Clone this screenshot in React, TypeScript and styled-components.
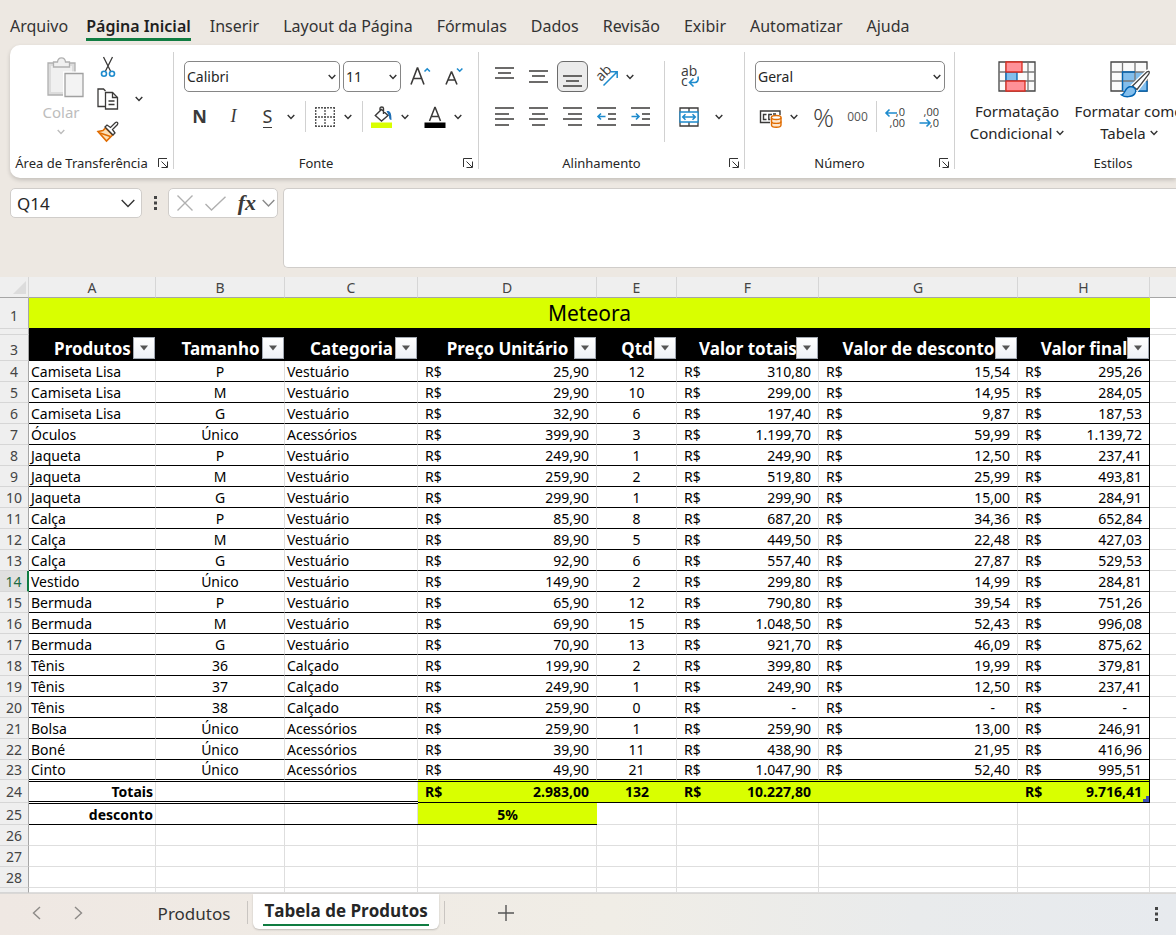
import React from "react";
import styled, { createGlobalStyle } from "styled-components";

const UI = '"Noto Sans", "Open Sans", sans-serif';
const CELL = '"Noto Sans", sans-serif';
const LIME = "#d9ff00";
const INK = "#3b3a39";
const BLUE = "#1e8bcd";
const GREEN = "#107c41";

const Global = createGlobalStyle`
  *, *::before, *::after { box-sizing: border-box; }
  body { margin: 0; background: #ede8e2; font-family: ${UI}; color: #262626; }
  button { font: inherit; color: inherit; background: none; border: 0; padding: 0; margin: 0; }
  svg { display: block; flex: none; overflow: visible; }
`;

const Page = styled.div`
  display: flex;
  flex-direction: column;
  min-height: 100vh;
  overflow: hidden;
`;

/* ---------- ribbon tabs ---------- */
const TabBar = styled.nav`
  display: flex;
  gap: 24px;
  height: 45px;
  padding: 14px 10px 0;
  white-space: nowrap;
  flex: none;
`;
const RibbonTab = styled.button<{ $active?: boolean }>`
  height: 27px;
  font-size: 16px;
  line-height: 24px;
  color: ${(p) => (p.$active ? "#1f1f1f" : "#333")};
  font-weight: ${(p) => (p.$active ? 600 : 400)};
  border-bottom: 3px solid ${(p) => (p.$active ? GREEN : "transparent")};
  margin: ${(p) => (p.$active ? "0 -5px 0 -6px" : "0")};
`;

/* ---------- ribbon ---------- */
const Ribbon = styled.section`
  display: flex;
  height: 133px;
  margin-left: 10px;
  background: #fff;
  border-radius: 10px 0 0 10px;
  box-shadow: 0 2px 4px rgba(0, 0, 0, 0.18);
  overflow: hidden;
  flex: none;
`;
const Group = styled.div<{ $width: number }>`
  display: flex;
  flex-direction: column;
  flex: none;
  width: ${(p) => p.$width}px;
  padding-top: 16px;
  position: relative;
  &:not(:last-child)::after {
    content: "";
    position: absolute;
    right: 0;
    top: 7px;
    bottom: 9px;
    width: 1px;
    background: #d1d1d1;
  }
`;
const GroupBody = styled.div`
  display: flex;
  flex-direction: column;
  gap: 9px;
  padding-left: 10px;
`;
const GroupFoot = styled.div`
  display: flex;
  align-items: center;
  margin-top: auto;
  height: 20px;
  margin-bottom: 5px;
  padding-right: 6px;
`;
const GroupName = styled.span`
  flex: 1;
  text-align: center;
  font-size: 13px;
  line-height: 20px;
  white-space: nowrap;
`;
const Launcher = styled.button`
  width: 15px;
  height: 20px;
  display: flex;
  align-items: center;
  justify-content: flex-end;
`;
const ToolRow = styled.div<{ $gap?: number }>`
  display: flex;
  align-items: center;
  gap: ${(p) => p.$gap ?? 3}px;
  height: 31px;
`;
const ToolButton = styled.button<{ $pressed?: boolean }>`
  width: 31px;
  height: 31px;
  display: flex;
  align-items: center;
  justify-content: center;
  color: ${INK};
  border-radius: 6px;
  border: 1px solid ${(p) => (p.$pressed ? "#6b6b6b" : "transparent")};
  background: ${(p) => (p.$pressed ? "#ebebeb" : "transparent")};
`;
const MenuButton = styled.button`
  width: 10px;
  height: 31px;
  display: flex;
  align-items: center;
  justify-content: center;
  margin-right: 6px;
`;
const Glyph = styled.span<{ $kind?: "bold" | "italic" | "under" }>`
  font-size: 18px;
  line-height: 21px;
  font-weight: ${(p) => (p.$kind === "bold" ? 700 : 400)};
  font-family: ${(p) => (p.$kind === "italic" ? '"Liberation Serif", serif' : UI)};
  font-style: ${(p) => (p.$kind === "italic" ? "italic" : "normal")};
  border-bottom: ${(p) => (p.$kind === "under" ? `1px solid ${INK}` : "0")};
`;
const PercentGlyph = styled.span`
  font: 300 26px/30px "Open Sans", sans-serif;
`;
const ThousandsGlyph = styled.span`
  font: 400 12px/16px "Open Sans", sans-serif;
  color: #555;
`;
const Rule = styled.span<{ $tall?: boolean }>`
  width: 1px;
  height: ${(p) => (p.$tall ? 81 : 31)}px;
  background: #d1d1d1;
  flex: none;
`;
const Picker = styled.label<{ $width: number }>`
  display: grid;
  align-items: center;
  width: ${(p) => p.$width}px;
  height: 31px;
  & > * { grid-area: 1 / 1; }
  & > svg { justify-self: end; margin-right: 4px; pointer-events: none; }
  & > select {
    appearance: none;
    width: 100%;
    height: 31px;
    padding: 0 2px;
    border: 1px solid #868686;
    border-radius: 5px;
    background: #fff;
    font: 14px ${UI};
    color: #262626;
  }
`;
const Columns = styled.div`
  display: flex;
  padding-left: 10px;
`;
const Stack = styled.div`
  display: flex;
  flex-direction: column;
  gap: 9px;
`;
const AlignMain = styled(Stack)`
  width: 175px;
`;
const AlignSide = styled(Stack)`
  padding-left: 8px;
`;
const PasteButton = styled.button`
  display: flex;
  flex-direction: column;
  align-items: center;
  width: 82px;
  margin-top: -4px;
  font-size: 15px;
  line-height: 20px;
  color: #bdbdbd;
  & > span { padding: 4px 0 7px; }
`;
const ClipTools = styled.div`
  display: grid;
  grid-template-columns: 22px 22px;
  grid-auto-rows: 32px;
  column-gap: 9px;
  align-items: center;
  justify-items: center;
  margin: -10px 0 0 -5px;
`;
const ClipButton = styled.button`
  grid-column: 1;
`;
const BigButton = styled.button<{ $width: number }>`
  display: flex;
  flex-direction: column;
  align-items: center;
  width: ${(p) => p.$width}px;
  font-size: 15px;
  line-height: 22px;
  white-space: nowrap;
  gap: 2px;
`;
const BigIcon = styled.span`
  height: 37px;
`;
const BigLine = styled.span`
  display: flex;
  align-items: center;
  gap: 4px;
`;
const BigLabel = styled.span`
  display: flex;
  flex-direction: column;
  align-items: center;
`;

/* ---------- formula bar ---------- */
const FormulaRow = styled.section`
  display: flex;
  align-items: flex-start;
  height: 99px;
  padding: 10px 0 0 10px;
  flex: none;
`;
const NameBox = styled.div`
  display: flex;
  align-items: center;
  width: 132px;
  height: 30px;
  background: #fff;
  border: 1px solid #d0cdca;
  border-radius: 5px;
  padding: 0 6px;
  & > input {
    flex: 1;
    min-width: 0;
    border: 0;
    padding: 0;
    background: none;
    font: 17px ${UI};
    color: #262626;
  }
`;
const DotsHandle = styled.span`
  display: flex;
  align-items: center;
  justify-content: center;
  width: 26px;
  height: 30px;
`;
const FormulaTools = styled.div`
  display: flex;
  align-items: center;
  justify-content: space-between;
  width: 110px;
  height: 30px;
  padding: 0 2px 0 8px;
  background: #fff;
  border: 1px solid #d0cdca;
  border-radius: 5px;
`;
const FxTools = styled.span`
  display: flex;
  align-items: center;
  gap: 6px;
`;
const Fx = styled.span`
  font: italic 700 22px/26px "Liberation Serif", serif;
  color: ${INK};
`;
const FormulaInput = styled.textarea`
  flex: 1;
  height: 80px;
  margin-left: 5px;
  border: 1px solid #d0cdca;
  border-right: 0;
  border-radius: 5px 0 0 5px;
  background: #fff;
  resize: none;
  font: 16px ${UI};
`;

/* ---------- sheet ---------- */
const SheetArea = styled.main`
  flex: 1;
  background: #fff;
  overflow: hidden;
`;
const Sheet = styled.table`
  width: 100%;
  table-layout: fixed;
  border-collapse: separate;
  border-spacing: 0;
  font-family: ${CELL};
  font-size: 14px;
  line-height: 18px;
  color: #000;
`;
const Row = styled.tr<{ $h: number }>`
  height: ${(p) => p.$h}px;
  & > :last-child { border-right: 0; }
`;
const ColHead = styled.th`
  padding: 0;
  font-weight: 400;
  vertical-align: bottom;
  color: #444;
  background: #efefef;
  border-right: 1px solid #d6d6d6;
  border-bottom: 1px solid #a6a6a6;
`;
const Corner = styled(ColHead)`
  vertical-align: middle;
  & > svg { margin: 0 2px 0 auto; }
`;
const RowHead = styled.th<{ $active?: boolean; $lift?: number }>`
  padding: 0 0 ${(p) => p.$lift ?? 0}px;
  font-weight: 400;
  vertical-align: bottom;
  color: ${(p) => (p.$active ? "#1d6b43" : "#444")};
  background: ${(p) => (p.$active ? "#e0e0e0" : "#efefef")};
  border-right: ${(p) => (p.$active ? `2px solid ${GREEN}` : "1px solid #a6a6a6")};
  border-bottom: 1px solid #d6d6d6;
`;
const Cell = styled.td<{
  $align?: "left" | "center" | "right";
  $line?: boolean;
  $edge?: boolean;
  $bold?: boolean;
}>`
  padding: 0 2px ${(p) => (p.$bold ? 1 : 0)}px;
  vertical-align: bottom;
  white-space: nowrap;
  text-align: ${(p) => p.$align ?? "left"};
  font-weight: ${(p) => (p.$bold ? 700 : 400)};
  border-right: 1px solid ${(p) => (p.$edge ? "#000" : "#dedede")};
  border-bottom: 1px solid ${(p) => (p.$line ? "#000" : "#dedede")};
`;
const TitleCell = styled.td`
  padding: 0;
  background: ${LIME};
  border-bottom: 1px solid #000;
  text-align: center;
  font-size: 21px;
  line-height: 28px;
`;
const BlackCell = styled.td`
  padding: 0;
  background: #000;
`;
const FieldHead = styled.th`
  position: relative;
  padding: 2px 0 0;
  background: #000;
  color: #fff;
  font-size: 17px;
  line-height: 24px;
  white-space: nowrap;
`;
const FilterButton = styled.button`
  position: absolute;
  right: 1px;
  bottom: 2px;
  width: 22px;
  height: 22px;
  display: flex;
  align-items: center;
  justify-content: center;
  background: linear-gradient(#fff, #eef1f6);
  border: 1px solid #a3a9b3;
`;
const Money = styled.div`
  display: flex;
  justify-content: space-between;
  padding: 0 5px;
`;
const Dash = styled.span`
  padding-right: 15px;
`;
const SumLabel = styled(Cell)`
  border-right: 0;
  padding-right: 3px;
  background: linear-gradient(#dedede, #dedede) right / 1px 100% no-repeat;
  border-bottom-color: #fff;
  box-shadow: inset 0 1px 0 #fff, inset 0 2px 0 #000, inset 0 -1px 0 #000;
`;
const SumCell = styled(Cell)`
  position: relative;
  background: ${LIME};
  border-right: ${(p) => (p.$edge ? "1px solid #000" : "0")};
  border-bottom-color: #000;
  box-shadow: inset 0 1px 0 ${LIME}, inset 0 2px 0 #000;
  & > div { padding-right: ${(p) => (p.$edge ? 5 : 6)}px; }
`;
const DiscountLabel = styled(Cell)`
  border-right: 0;
  padding: 0 3px 0 2px;
  background: linear-gradient(#dedede, #dedede) right / 1px 100% no-repeat;
  box-shadow: inset 0 1px 0 #000;
`;
const DiscountCell = styled(Cell)`
  padding-bottom: 0;
  background: ${LIME};
  border-right: 0;
`;
const ResizeMark = styled.span`
  position: absolute;
  right: 0;
  bottom: 0;
`;

/* ---------- sheet tabs ---------- */
const Footer = styled.footer`
  display: flex;
  align-items: flex-start;
  flex: none;
  height: 42px;
  border-top: 1px solid #dad8d6;
  background: linear-gradient(90deg, #efe8e3 0%, #f0ede6 52%, #e9ebec 78%, #e7eaee 100%);
`;
const NavButton = styled.button`
  width: 42px;
  height: 37px;
  display: flex;
  align-items: center;
  justify-content: center;
`;
const SheetNav = styled.div`
  display: flex;
  width: 141px;
  padding-left: 15px;
`;
const SheetTab = styled.button`
  width: 106px;
  height: 40px;
  padding: 0;
  font-size: 17px;
  line-height: 38px;
  color: #333;
`;
const ActiveTab = styled.button`
  min-width: 186px;
  height: 35px;
  margin: 0 5px;
  padding: 0 10px 3px;
  background: #fff;
  border-radius: 0 0 6px 6px;
  box-shadow: 0 1px 2px rgba(0, 0, 0, 0.2);
  font: 700 17px/34px "Open Sans", sans-serif;
  & > span { display: block; height: 32px; border-bottom: 2px solid ${GREEN}; }
`;
const TabRule = styled.span`
  width: 1px;
  height: 23px;
  margin-top: 7px;
  background: #c9c5c1;
`;
const AddSheet = styled(NavButton)`
  margin-left: 40px;
`;
const MoreSheets = styled(NavButton)`
  width: 39px;
  height: 40px;
  margin-left: auto;
`;

/* ---------- drawings ---------- */
const Chev = ({ w = 8, color = "#333", s = 1.4 }: { w?: number; color?: string; s?: number }) => (
  <svg width={w} height={w / 2 + 2} viewBox={`0 0 ${w} ${w / 2 + 2}`} fill="none" stroke={color} strokeWidth={s}>
    <path d={`M.7 1 L${w / 2} ${w / 2 + 0.5} L${w - 0.7} 1`} />
  </svg>
);
const Dots = ({ color = "#444" }: { color?: string }) => (
  <svg width="3" height="14" viewBox="0 0 3 14" fill={color}>
    <path d="M0 0h3v3H0zM0 5.500h3v3H0zM0 11h3v3H0z" />
  </svg>
);
const LaunchIcon = () => (
  <svg width="10" height="10" viewBox="0 0 10 10" fill="none" stroke="#333" strokeWidth="1">
    <path d="M.5 9V.5H9M3.500 3.500l5.500 5.500M9.500 3.500v6H3.500" />
  </svg>
);
const lineIcon = (rows: [number, number, number][]) => (
  <svg width="20" height="20" viewBox="0 0 20 20" stroke={INK} strokeWidth="1.4">
    {rows.map(([y, a, b]) => (
      <path key={y} d={`M${a} ${y}H${b}`} />
    ))}
  </svg>
);
const IconPaste = () => (
  <svg width="45" height="41" viewBox="-8 0 45 41" fill="#f0f0f0" stroke="#b0b0b0" strokeWidth="1.3">
    <path d="M1 6h27v32H1z" fill="#dcdcdc" />
    <path d="M4 9h21v26H4z" stroke="none" />
    <path d="M6.500 10V5h4c.5-5.500 7.500-5.500 8 0h4v5z" />
    <path d="M18 16.500h18v23H18z" fill="#f3f3f3" stroke="#fff" strokeWidth="4" />
    <path d="M18 16.500h18v23H18z" fill="#f3f3f3" stroke="#a0a0a0" />
  </svg>
);
const IconCut = () => (
  <svg width="16" height="22" viewBox="0 0 16 22" fill="none" strokeWidth="1.3">
    <path d="M3.500 1l7 14M12.500 1l-7 14" stroke={INK} />
    <circle cx="4" cy="17.800" r="2.500" stroke={BLUE} strokeWidth="1.600" />
    <circle cx="12" cy="17.800" r="2.500" stroke={BLUE} strokeWidth="1.600" />
  </svg>
);
const IconCopy = () => (
  <svg width="22" height="22" viewBox="0 0 22 22" fill="#fff" stroke={INK} strokeWidth="1.300">
    <path d="M8 18.500H1V1h5.500l2 2" />
    <path d="M8.500 4.500h7l5 5v11.500h-12z" />
    <path d="M15.500 4.500v5h5M11.500 13h6M11.500 16.500h6" fill="none" />
  </svg>
);
const IconBrush = () => (
  <svg width="22" height="21" viewBox="0 0 22 21" fill="none" strokeWidth="1.300">
    <path d="M1 10.500l5-1 2.500-2.500 7 7-6 6z" fill="#fbe0b8" stroke="#e06c00" strokeWidth="1.600" />
    <path d="M3 12l10.500 3.500" stroke="#e06c00" strokeWidth="1.600" />
    <path d="M8 6l2-2 3.500 2.500L18.500 1.500c1.500-1 3 .5 2 2l-5 5L18 12l-2 2z" fill="#fff" stroke={INK} />
  </svg>
);
const IconGrow = ({ down }: { down?: boolean }) => (
  <svg width="22" height="20" viewBox="-1 1 22 20" fill="none" stroke={INK} strokeWidth="1.600">
    {down ? <path d="M2 18.500L7.300 6h.4L13 18.500M4 14h7" /> : <path d="M1 18.500L7.300 2h.4L14 18.500M3.500 12.500h8" />}
    <path d={down ? "M13 2.500l2.700 2.700L18.400 2.500" : "M14.500 5.500l2.700-2.700L19.900 5.500"} stroke={BLUE} />
  </svg>
);
const IconBorders = () => (
  <svg width="20" height="20" viewBox="0 0 20 20" fill="none" stroke="#555" strokeWidth="1.400">
    <path d="M0 .7h20M0 19.300h20M.7 0v20M19.300 0v20M10 0v20M0 10h20" strokeDasharray="2 1" />
  </svg>
);
const IconFill = () => (
  <svg width="22" height="22" viewBox="0 0 22 22" fill="none" stroke={INK} strokeWidth="1.400">
    <path d="M10.500 3.500L17 9.500l-6.500 5.500L4.300 9.500z M9 6V2.500C9 .5 12.500 .5 12.500 2.500V8" />
    <path d="M15.500 5c3.500-.5 5 1 5 9-1.500 0-2.500-1-2.500-4z" fill="#1f6fb5" stroke="none" />
    <path d="M0 16.500h21V22H0z" fill={LIME} stroke="none" />
  </svg>
);
const IconFontColor = () => (
  <svg width="22" height="22" viewBox="0 0 22 22" fill="none" stroke={INK} strokeWidth="1.500">
    <path d="M5.500 15L10.800 1.500h.4L16.500 15M7.500 10.500h7" />
    <path d="M.5 16.500h21V22H.5z" fill="#000" stroke="none" />
  </svg>
);
const SvgText = styled.text`
  font-family: "Open Sans", sans-serif;
  fill: ${INK};
`;
const IconOrient = () => (
  <svg width="24" height="24" viewBox="0 0 24 24" fill="none" stroke={BLUE} strokeWidth="1.500">
    <SvgText fontSize="14" stroke="none" transform="translate(6 17) rotate(-45)">ab</SvgText>
    <path d="M8.500 20.500L22 7M16 6.800H22.200V13" />
  </svg>
);
const IconWrap = () => (
  <svg width="22" height="24" viewBox="0 0 22 24" fill="none" stroke={BLUE} strokeWidth="1.600">
    <SvgText x="3" y="11" fontSize="14" stroke="none">ab</SvgText>
    <SvgText x="3" y="21" fontSize="14" stroke="none">c</SvgText>
    <path d="M20 11.500c1 4-1 6-3 6h-5M15.500 13.500l-4 4 4 4" />
  </svg>
);
const IconMerge = () => (
  <svg width="20" height="20" viewBox="0 0 20 20" fill="none" stroke={INK} strokeWidth="1.300">
    <path d="M1 1h18v18H1zM10 1v4M10 15v4" />
    <path d="M1 5h18v10H1z" fill="#fff" stroke={BLUE} />
    <path d="M4 10h12M6.500 7.200L3.700 10l2.800 2.800M13.500 7.200L16.300 10l-2.800 2.800" stroke={BLUE} strokeWidth="1.500" />
  </svg>
);
const IconIndent = ({ back }: { back?: boolean }) => (
  <svg width="20" height="20" viewBox="0 0 20 20" fill="none" stroke={INK} strokeWidth="1.400">
    <path d="M0 1h19M11 7h8M11 12h8M0 18h19" />
    <path d={back ? "M8.500 9.500H1M4 6.500l-3 3 3 3" : "M.5 9.500H8M5 6.500l3 3-3 3"} stroke={BLUE} strokeWidth="1.600" />
  </svg>
);
const IconCurrency = () => (
  <svg width="23" height="20" viewBox="0 0 23 20" fill="none" stroke={INK} strokeWidth="1.400">
    <path d="M11 15.500H1.500V4H21v4" />
    <path d="M7.500 7.500H4.500v5h3M13 7.500H9.800v5h1.500M14 7h3" />
    <path d="M12.500 10.500v7.500c0 3 9.500 3 9.500 0V10.500" fill="#fde7cf" stroke="#e06c00" />
    <ellipse cx="17.200" cy="10.500" rx="4.800" ry="2" fill="#fff" stroke="#e06c00" />
    <path d="M12.500 14.500c0 2.500 9.500 2.500 9.500 0" stroke="#e06c00" />
  </svg>
);
const IconDecimal = ({ less }: { less?: boolean }) => (
  <svg width="22" height="24" viewBox="0 0 22 24" fill="none" stroke={BLUE} strokeWidth="1.600">
    <SvgText x="20" y="11" fontSize="11" textAnchor="end" stroke="none">{less ? ",00" : ",0"}</SvgText>
    <SvgText x="20" y="22" fontSize="11" textAnchor="end" stroke="none">{less ? ",0" : ",00"}</SvgText>
    <path d={less ? "M.5 18h10.500M7.500 14.500l3.500 3.500-3.500 3.500" : "M12 8H1M4.500 4.500L1 8l3.500 3.500"} />
  </svg>
);
const IconCondFormat = () => (
  <svg width="38" height="31" viewBox="0 0 38 31" fill="#fafafa" stroke="#444" strokeWidth="1.300">
    <path d="M1 1h36v29H1z" />
    <path d="M1 11h36M1 20h36M8 1v29M30 1v29" stroke="#777" />
    <path d="M8 11h11v9H8z" fill="#83beec" stroke="#0063b1" />
    <path d="M8 1h16v10H8zM8 20h19v10H8z" fill="#ff9198" stroke="#d92c20" />
  </svg>
);
const IconFormatTable = () => (
  <svg width="41" height="37" viewBox="-1 0 41 37" fill="#fafafa" stroke="#444" strokeWidth="1.300">
    <path d="M1 1h36v29H1z" />
    <path d="M12 11h25v19H12z" fill="#83beec" stroke="none" />
    <path d="M1 11h36M1 20h36M12.500 1v29M25 1v29" stroke="#777" fill="none" />
    <path d="M12.500 30V11H25M37 20v10H25" stroke="#0063b1" fill="none" />
    <path d="M37.500 10.500c3-1 2 1.500 1 3L27 28.500l-4.500-3.500z" fill="#fff" stroke="#fff" strokeWidth="4" />
    <path d="M37 10.800c3-1.300 2.500 1 1.500 2.700L27 28.500 22.500 25z" fill="#fff" />
    <path d="M11.500 34c4-.5 3-8 9-8.500 4 0 6.500 3.500 4.500 7-3 4-10 4-13.500 1.500z" fill="#83beec" stroke="#0063b1" />
  </svg>
);

/* ---------- data ---------- */
type Item = [string, string, string, string, string, string, string, string];
const items: Item[] = [
  ["Camiseta Lisa", "P", "Vestuário", "25,90", "12", "310,80", "15,54", "295,26"],
  ["Camiseta Lisa", "M", "Vestuário", "29,90", "10", "299,00", "14,95", "284,05"],
  ["Camiseta Lisa", "G", "Vestuário", "32,90", "6", "197,40", "9,87", "187,53"],
  ["Óculos", "Único", "Acessórios", "399,90", "3", "1.199,70", "59,99", "1.139,72"],
  ["Jaqueta", "P", "Vestuário", "249,90", "1", "249,90", "12,50", "237,41"],
  ["Jaqueta", "M", "Vestuário", "259,90", "2", "519,80", "25,99", "493,81"],
  ["Jaqueta", "G", "Vestuário", "299,90", "1", "299,90", "15,00", "284,91"],
  ["Calça", "P", "Vestuário", "85,90", "8", "687,20", "34,36", "652,84"],
  ["Calça", "M", "Vestuário", "89,90", "5", "449,50", "22,48", "427,03"],
  ["Calça", "G", "Vestuário", "92,90", "6", "557,40", "27,87", "529,53"],
  ["Vestido", "Único", "Vestuário", "149,90", "2", "299,80", "14,99", "284,81"],
  ["Bermuda", "P", "Vestuário", "65,90", "12", "790,80", "39,54", "751,26"],
  ["Bermuda", "M", "Vestuário", "69,90", "15", "1.048,50", "52,43", "996,08"],
  ["Bermuda", "G", "Vestuário", "70,90", "13", "921,70", "46,09", "875,62"],
  ["Tênis", "36", "Calçado", "199,90", "2", "399,80", "19,99", "379,81"],
  ["Tênis", "37", "Calçado", "249,90", "1", "249,90", "12,50", "237,41"],
  ["Tênis", "38", "Calçado", "259,90", "0", "-", "-", "-"],
  ["Bolsa", "Único", "Acessórios", "259,90", "1", "259,90", "13,00", "246,91"],
  ["Boné", "Único", "Acessórios", "39,90", "11", "438,90", "21,95", "416,96"],
  ["Cinto", "Único", "Acessórios", "49,90", "21", "1.047,90", "52,40", "995,51"],
];
const fields = ["Produtos", "Tamanho", "Categoria", "Preço Unitário", "Qtd", "Valor totais", "Valor de desconto", "Valor final"];
const columnWidths = [29, 127, 129, 133, 179, 80, 142, 199, 132];
const tabs = ["Arquivo", "Página Inicial", "Inserir", "Layout da Página", "Fórmulas", "Dados", "Revisão", "Exibir", "Automatizar", "Ajuda"];

const Amount = ({ value }: { value: string }) => (
  <Money>
    <span>R$</span>
    {value === "-" ? <Dash>-</Dash> : <span>{value}</span>}
  </Money>
);
const More = ({ label }: { label: string }) => (
  <MenuButton aria-label={label}>
    <Chev />
  </MenuButton>
);
const Foot = ({ name }: { name: string }) => (
  <GroupFoot>
    <GroupName>{name}</GroupName>
    <Launcher aria-label={`Configurações: ${name}`}>
      <LaunchIcon />
    </Launcher>
  </GroupFoot>
);

export default function App() {
  return (
    <Page>
      <Global />
      <TabBar>
        {tabs.map((t) => (
          <RibbonTab key={t} $active={t === "Página Inicial"}>{t}</RibbonTab>
        ))}
      </TabBar>

      <Ribbon>
        <Group $width={164}>
          <Columns>
            <PasteButton>
              <IconPaste />
              <span>Colar</span>
              <Chev color="#bdbdbd" />
            </PasteButton>
            <ClipTools>
              <ClipButton aria-label="Recortar"><IconCut /></ClipButton>
              <ClipButton aria-label="Copiar"><IconCopy /></ClipButton>
              <button aria-label="Opções de cópia"><Chev /></button>
              <ClipButton aria-label="Pincel de Formatação"><IconBrush /></ClipButton>
            </ClipTools>
          </Columns>
          <Foot name="Área de Transferência" />
        </Group>

        <Group $width={305}>
          <GroupBody>
            <ToolRow>
              <Picker $width={156}>
                <select aria-label="Fonte"><option>Calibri</option></select>
                <Chev />
              </Picker>
              <Picker $width={58}>
                <select aria-label="Tamanho da fonte"><option>11</option></select>
                <Chev />
              </Picker>
              <ToolButton aria-label="Aumentar fonte"><IconGrow /></ToolButton>
              <ToolButton aria-label="Diminuir fonte"><IconGrow down /></ToolButton>
            </ToolRow>
            <ToolRow>
              <ToolButton aria-label="Negrito"><Glyph $kind="bold">N</Glyph></ToolButton>
              <ToolButton aria-label="Itálico"><Glyph $kind="italic">I</Glyph></ToolButton>
              <ToolButton aria-label="Sublinhado"><Glyph $kind="under">S</Glyph></ToolButton>
              <More label="Opções de sublinhado" />
              <Rule />
              <ToolButton aria-label="Bordas"><IconBorders /></ToolButton>
              <More label="Opções de bordas" />
              <Rule />
              <ToolButton aria-label="Cor de preenchimento"><IconFill /></ToolButton>
              <More label="Opções de preenchimento" />
              <ToolButton aria-label="Cor da fonte"><IconFontColor /></ToolButton>
              <More label="Opções de cor da fonte" />
            </ToolRow>
          </GroupBody>
          <Foot name="Fonte" />
        </Group>

        <Group $width={266}>
          <Columns>
            <AlignMain>
              <ToolRow>
                <ToolButton aria-label="Alinhar em cima">{lineIcon([[1, 0, 19], [6, 3, 16], [11, 0, 19]])}</ToolButton>
                <ToolButton aria-label="Alinhar no meio">{lineIcon([[4, 0, 19], [9, 3, 16], [15, 0, 19]])}</ToolButton>
                <ToolButton aria-label="Alinhar embaixo" $pressed>{lineIcon([[9, 0, 19], [14, 3, 16], [19, 0, 19]])}</ToolButton>
                <ToolButton aria-label="Orientação"><IconOrient /></ToolButton>
                <More label="Opções de orientação" />
              </ToolRow>
              <ToolRow>
                <ToolButton aria-label="Alinhar à esquerda">{lineIcon([[1, 0, 19], [7, 0, 14], [12, 0, 19], [18, 0, 14]])}</ToolButton>
                <ToolButton aria-label="Centralizar">{lineIcon([[1, 0, 19], [7, 3, 16], [12, 0, 19], [18, 3, 16]])}</ToolButton>
                <ToolButton aria-label="Alinhar à direita">{lineIcon([[1, 0, 19], [7, 5, 19], [12, 0, 19], [18, 5, 19]])}</ToolButton>
                <ToolButton aria-label="Diminuir recuo"><IconIndent back /></ToolButton>
                <ToolButton aria-label="Aumentar recuo"><IconIndent /></ToolButton>
              </ToolRow>
            </AlignMain>
            <Rule $tall />
            <AlignSide>
              <ToolRow>
                <ToolButton aria-label="Quebrar texto"><IconWrap /></ToolButton>
              </ToolRow>
              <ToolRow $gap={10}>
                <ToolButton aria-label="Mesclar e centralizar"><IconMerge /></ToolButton>
                <More label="Opções de mesclagem" />
              </ToolRow>
            </AlignSide>
          </Columns>
          <Foot name="Alinhamento" />
        </Group>

        <Group $width={210}>
          <GroupBody>
            <ToolRow>
              <Picker $width={190}>
                <select aria-label="Formato de número"><option>Geral</option></select>
                <Chev />
              </Picker>
            </ToolRow>
            <ToolRow>
              <ToolButton aria-label="Formato de contabilização"><IconCurrency /></ToolButton>
              <More label="Opções de moeda" />
              <ToolButton aria-label="Porcentagem"><PercentGlyph>%</PercentGlyph></ToolButton>
              <ToolButton aria-label="Separador de milhares"><ThousandsGlyph>000</ThousandsGlyph></ToolButton>
              <Rule />
              <ToolButton aria-label="Aumentar casas decimais"><IconDecimal /></ToolButton>
              <ToolButton aria-label="Diminuir casas decimais"><IconDecimal less /></ToolButton>
            </ToolRow>
          </GroupBody>
          <Foot name="Número" />
        </Group>

        <Group $width={322}>
          <Columns>
            <BigButton $width={104}>
              <BigIcon><IconCondFormat /></BigIcon>
              <BigLabel>
                <span>Formatação</span>
                <BigLine>Condicional <Chev /></BigLine>
              </BigLabel>
            </BigButton>
            <BigButton $width={120}>
              <BigIcon><IconFormatTable /></BigIcon>
              <BigLabel>
                <span>Formatar como</span>
                <BigLine>Tabela <Chev /></BigLine>
              </BigLabel>
            </BigButton>
          </Columns>
          <GroupFoot>
            <GroupName>Estilos</GroupName>
          </GroupFoot>
        </Group>
      </Ribbon>

      <FormulaRow>
        <NameBox>
          <input aria-label="Caixa de nome" defaultValue="Q14" />
          <button aria-label="Abrir caixa de nome"><Chev w={14} /></button>
        </NameBox>
        <DotsHandle><Dots /></DotsHandle>
        <FormulaTools>
          <button aria-label="Cancelar">
            <svg width="16" height="16" viewBox="0 0 16 16" stroke="#b0b0b0" strokeWidth="1.400"><path d="M.5 .5l15 15M15.500 .5l-15 15" /></svg>
          </button>
          <button aria-label="Confirmar">
            <svg width="21" height="15" viewBox="0 0 21 15" fill="none" stroke="#b0b0b0" strokeWidth="1.400"><path d="M.5 8l6 6L20.500 .7" /></svg>
          </button>
          <FxTools>
            <button aria-label="Inserir função"><Fx>fx</Fx></button>
            <button aria-label="Mais funções"><Chev w={13} color="#8a8a8a" /></button>
          </FxTools>
        </FormulaTools>
        <FormulaInput aria-label="Barra de fórmulas" />
      </FormulaRow>

      <SheetArea>
        <Sheet>
          <colgroup>
            {columnWidths.map((w, i) => (
              <col key={i} width={w} />
            ))}
            <col />
          </colgroup>
          <thead>
            <Row $h={21}>
              <Corner aria-label="Selecionar tudo">
                <svg width="13" height="13" viewBox="0 0 13 13" fill="#dcdcdc"><path d="M13 0v13H0z" /></svg>
              </Corner>
              {"ABCDEFGH".split("").map((c) => (
                <ColHead key={c} scope="col">{c}</ColHead>
              ))}
              <ColHead />
            </Row>
          </thead>
          <tbody>
            <Row $h={31}>
              <RowHead scope="row" $lift={3}>1</RowHead>
              <TitleCell colSpan={8}>Meteora</TitleCell>
              <Cell />
            </Row>
            <Row $h={6}>
              <RowHead />
              <BlackCell colSpan={8} />
              <Cell />
            </Row>
            <Row $h={26}>
              <RowHead scope="row" $lift={1}>3</RowHead>
              {fields.map((f) => (
                <FieldHead key={f} scope="col">
                  {f}
                  <FilterButton aria-label={`Filtrar ${f}`}>
                    <svg width="8" height="6" viewBox="0 0 8 6" fill="#555"><path d="M0 .5h8L4 5.500z" /></svg>
                  </FilterButton>
                </FieldHead>
              ))}
              <Cell />
            </Row>
            {items.map((it, i) => (
              <Row key={i} $h={i === items.length - 1 ? 20 : 21}>
                <RowHead scope="row" $active={i === 10}>{i + 4}</RowHead>
                <Cell $line>{it[0]}</Cell>
                <Cell $line $align="center">{it[1]}</Cell>
                <Cell $line>{it[2]}</Cell>
                <Cell $line><Amount value={it[3]} /></Cell>
                <Cell $line $align="center">{it[4]}</Cell>
                <Cell $line><Amount value={it[5]} /></Cell>
                <Cell $line><Amount value={it[6]} /></Cell>
                <Cell $line $edge><Amount value={it[7]} /></Cell>
                <Cell />
              </Row>
            ))}
            <Row $h={23}>
              <RowHead scope="row" $lift={1}>24</RowHead>
              <SumLabel $bold $align="right">Totais</SumLabel>
              <SumLabel />
              <SumLabel />
              <SumCell $bold><Amount value="2.983,00" /></SumCell>
              <SumCell $bold $align="center">132</SumCell>
              <SumCell $bold><Amount value="10.227,80" /></SumCell>
              <SumCell />
              <SumCell $bold $edge>
                <Amount value="9.716,41" />
                <ResizeMark>
                  <svg width="6" height="6" viewBox="0 0 6 6" fill="#3f51b5"><path d="M3 0h3v6H0V3h3z" /></svg>
                </ResizeMark>
              </SumCell>
              <Cell />
            </Row>
            <Row $h={22}>
              <RowHead scope="row">25</RowHead>
              <DiscountLabel $line $bold $align="right">desconto</DiscountLabel>
              <DiscountLabel $line />
              <DiscountLabel $line />
              <DiscountCell $line $bold $align="center">5%</DiscountCell>
              <Cell /><Cell /><Cell /><Cell /><Cell />
            </Row>
            {[26, 27, 28, 29].map((n) => (
              <Row key={n} $h={n === 29 ? 5 : 21}>
                <RowHead scope="row">{n === 29 ? null : n}</RowHead>
                {fields.map((f) => (
                  <Cell key={f} />
                ))}
                <Cell />
              </Row>
            ))}
          </tbody>
        </Sheet>
      </SheetArea>

      <Footer>
        <SheetNav>
          <NavButton aria-label="Planilha anterior">
            <svg width="9" height="14" viewBox="0 0 9 14" fill="none" stroke="#8d8a87" strokeWidth="1.400"><path d="M8 1L1.500 7 8 13" /></svg>
          </NavButton>
          <NavButton aria-label="Próxima planilha">
            <svg width="9" height="14" viewBox="0 0 9 14" fill="none" stroke="#8d8a87" strokeWidth="1.400"><path d="M1 1l6.500 6L1 13" /></svg>
          </NavButton>
        </SheetNav>
        <SheetTab>Produtos</SheetTab>
        <TabRule />
        <ActiveTab><span>Tabela de Produtos</span></ActiveTab>
        <TabRule />
        <AddSheet aria-label="Nova planilha">
          <svg width="16" height="16" viewBox="0 0 16 16" stroke="#555" strokeWidth="1.400"><path d="M8 0v16M0 8h16" /></svg>
        </AddSheet>
        <MoreSheets aria-label="Mais opções"><Dots /></MoreSheets>
      </Footer>
    </Page>
  );
}
